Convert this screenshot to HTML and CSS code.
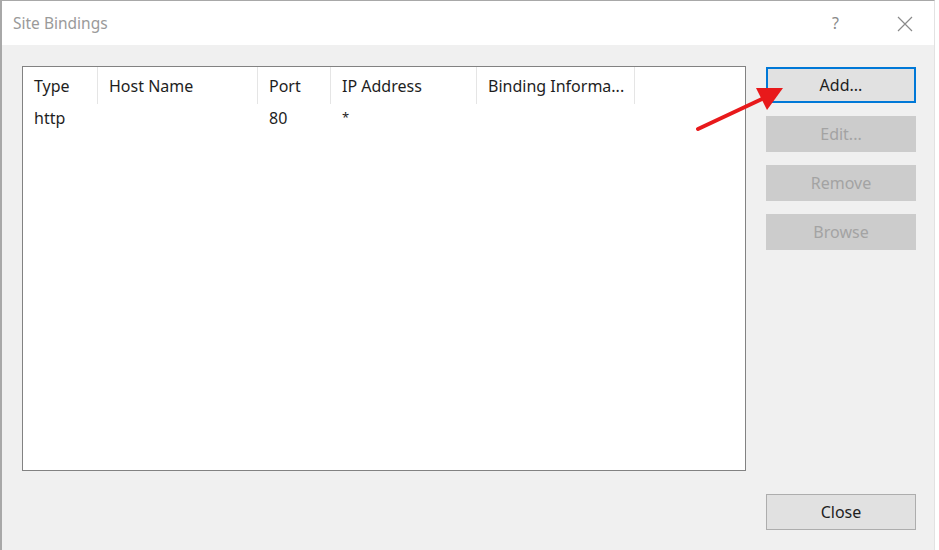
FILE: index.html
```html
<!DOCTYPE html>
<html lang="en">
<head>
  <meta charset="UTF-8">
  <title>Site Bindings</title>
  <link rel="stylesheet" href="styles.css">
</head>
<body>
  <div class="window">
    <div class="titlebar">
      <span class="title">Site Bindings</span>
      <span class="help">?</span>
      <span class="close-x">
        <svg width="16" height="16" viewBox="0 0 16 16"><path d="M1 1 L15 15 M15 1 L1 15" stroke="#8a8a8a" stroke-width="1.2" fill="none"/></svg>
      </span>
    </div>
    <div class="content">
      <div class="list">
        <div class="row header">
          <div class="col c-type">Type</div>
          <div class="col c-host">Host Name</div>
          <div class="col c-port">Port</div>
          <div class="col c-ip">IP Address</div>
          <div class="col c-bind">Binding Informa...</div>
        </div>
        <div class="row item">
          <div class="col c-type">http</div>
          <div class="col c-host"></div>
          <div class="col c-port">80</div>
          <div class="col c-ip"><span class="star">*</span></div>
          <div class="col c-bind"></div>
        </div>
      </div>
      <div class="buttons">
        <button class="btn default">Add...</button>
        <button class="btn" disabled>Edit...</button>
        <button class="btn" disabled>Remove</button>
        <button class="btn" disabled>Browse</button>
        <button class="btn close">Close</button>
      </div>
      <svg class="arrow" width="110" height="60" viewBox="0 0 110 60">
        <path d="M8 53 L72 23" stroke="#e8191b" stroke-width="4" stroke-linecap="round"/>
        <path d="M93 12 L66 12 L77 34 Z" fill="#e8191b"/>
      </svg>
    </div>
  </div>
</body>
</html>
```

FILE: styles.css
```css
body {
  margin: 0;
  padding: 0;
  background-color: #fff;
  font-family: 'Noto Sans', 'Open Sans', sans-serif;
  color: #1e1e1e;
}

.window {
  width: 932px;
  height: 549px;
  border-top: 1px solid #a8a8a8;
  border-left: 2px solid #a8a8a8;
  border-right: 1px solid #e2e2e2;
  background-color: #f0f0f0;
  display: flex;
  flex-direction: column;
}

.titlebar {
  height: 44px;
  background-color: #fff;
  display: flex;
  align-items: center;
  padding-left: 11px;
}

.title {
  font-size: 15.5px;
  color: #9a9a9a;
  flex: 1;
}

.help {
  font-size: 16px;
  color: #8a8a8a;
  width: 20px;
  margin-left: 2px;
  margin-right: 45px;
}

.close-x {
  width: 16px;
  height: 16px;
  margin-right: 21px;
}

.content {
  position: relative;
  flex: 1;
  display: flex;
  padding: 21px 18px 20px 20px;
  gap: 20px;
}

.list {
  width: 722px;
  height: 403px;
  background-color: #fff;
  border: 1px solid #828282;
}

.row {
  display: flex;
  font-size: 16px;
}

.header {
  height: 37px;
  align-items: center;
}

.header .col {
  height: 37px;
  line-height: 39px;
  border-right: 1px solid #e5e5e5;
}

.item {
  height: 26px;
  line-height: 28px;
}

.item .col {
  border-right: 1px solid transparent;
}

.col {
  padding-left: 11px;
  box-sizing: border-box;
  white-space: nowrap;
  overflow: hidden;
}

.star {
  font-size: 13px;
  position: relative;
  top: -2px;
}

.c-type { width: 75px; }
.c-host { width: 160px; }
.c-port { width: 73px; }
.c-ip { width: 146px; }
.c-bind { width: 158px; }

.buttons {
  width: 150px;
  display: flex;
  flex-direction: column;
  gap: 13px;
  padding-top: 1px;
}

.btn {
  height: 36px;
  font-family: inherit;
  font-size: 16px;
  background-color: #e1e1e1;
  border: 1px solid #adadad;
  color: #1e1e1e;
  padding: 0;
}

.btn:disabled {
  background-color: #cccccc;
  border-color: #cccccc;
  color: #a3a3a3;
}

.default {
  border: 2px solid #0078d7;
}

.close {
  margin-top: auto;
}

.arrow {
  position: absolute;
  left: 688px;
  top: 31px;
}
```
